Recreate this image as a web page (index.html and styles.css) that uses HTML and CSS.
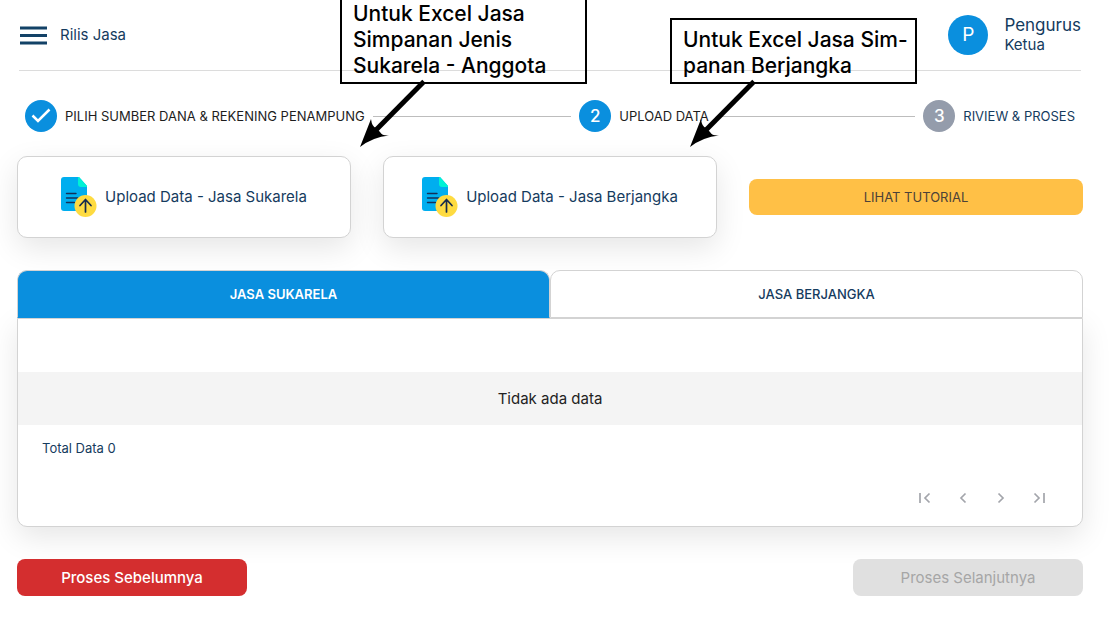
FILE: index.html
```html
<!DOCTYPE html>
<html lang="id">
<head>
<meta charset="utf-8">
<meta name="viewport" content="width=device-width, initial-scale=1">
<title>Rilis Jasa</title>
<link rel="stylesheet" href="styles.css">
</head>
<body>
<svg class="defs" aria-hidden="true">
  <symbol id="file-upload" viewBox="0 0 36 41">
    <path fill="#00aeef" d="M3 0h15l8 9v22a3 3 0 0 1-3 3H3a3 3 0 0 1-3-3V3a3 3 0 0 1 3-3z"/>
    <path fill="#00f2d5" d="M17 0h1l8 9v1h-6a3 3 0 0 1-3-3z"/>
    <path fill="none" stroke="#123159" stroke-width="1.4" stroke-linecap="round" d="M5.500 16.500h9.500M5.500 21h11M5.500 25.500h8"/>
    <circle cx="24.500" cy="29" r="11" fill="#fedb41"/>
    <path fill="none" stroke="#172b4d" stroke-width="1.700" stroke-linecap="round" stroke-linejoin="round" d="M24.500 35V23M19 28.500l5.500-6 5.500 6"/>
  </symbol>
  <symbol id="arrow" viewBox="0 0 68 70">
    <path fill="none" stroke="#000" stroke-width="5" d="M65 2.500L14 54"/>
    <path d="M1 68L12 40Q13 48 17 49L21 53Q23 57 30 56.500Q14 58 1 68z"/>
  </symbol>
</svg>

<div class="page">
  <header class="topbar">
    <button class="menu" type="button" aria-label="Menu">
      <svg width="27" height="19" viewBox="0 0 27 19"><path fill="#134267" d="M0 .5h27v3H0zM0 8h27v3H0zM0 15.500h27v3H0z"/></svg>
    </button>
    <h1 class="title">Rilis Jasa</h1>
    <div class="user">
      <span class="avatar">P</span>
      <div class="who">
        <div class="name">Pengurus</div>
        <div class="role">Ketua</div>
      </div>
    </div>
  </header>

  <main>
    <ol class="stepper">
      <li class="step done">
        <span class="dot"><svg width="20" height="16" viewBox="0 0 20 16"><path fill="none" stroke="#fff" stroke-width="2.500" d="M1.500 7.500l5.500 5.500L18.500 1.500"/></svg></span>
        PILIH SUMBER DANA &amp; REKENING PENAMPUNG
      </li>
      <li class="line" aria-hidden="true"></li>
      <li class="step active"><span class="dot">2</span>UPLOAD DATA</li>
      <li class="line" aria-hidden="true"></li>
      <li class="step"><span class="dot">3</span>RIVIEW &amp; PROSES</li>
    </ol>

    <div class="actions">
      <button class="upload" type="button"><svg width="36" height="41"><use href="#file-upload"/></svg>Upload Data - Jasa Sukarela</button>
      <button class="upload" type="button"><svg width="36" height="41"><use href="#file-upload"/></svg>Upload Data - Jasa Berjangka</button>
      <button class="tutorial" type="button">LIHAT TUTORIAL</button>
    </div>

    <div class="tabs" role="tablist">
      <button class="tab selected" type="button" role="tab" aria-selected="true" aria-controls="panel">JASA SUKARELA</button>
      <button class="tab" type="button" role="tab" aria-selected="false" aria-controls="panel">JASA BERJANGKA</button>
    </div>
    <section class="panel" id="panel" role="tabpanel">
      <table class="table">
        <thead><tr><th></th></tr></thead>
        <tbody><tr><td>Tidak ada data</td></tr></tbody>
      </table>
      <p class="total">Total Data 0</p>
      <nav class="pager" aria-label="Halaman">
        <button type="button" aria-label="Halaman pertama"><svg viewBox="0 0 14 14"><path d="M2 2v10M11.500 2.500L7 7l4.500 4.500"/></svg></button>
        <button type="button" aria-label="Sebelumnya"><svg viewBox="0 0 14 14"><path d="M9.500 2.500L5 7l4.500 4.500"/></svg></button>
        <button type="button" aria-label="Berikutnya"><svg viewBox="0 0 14 14"><path d="M4.500 2.500L9 7l-4.500 4.500"/></svg></button>
        <button type="button" aria-label="Halaman terakhir"><svg viewBox="0 0 14 14"><path d="M2.500 2.500L7 7l-4.500 4.500M12 2v10"/></svg></button>
      </nav>
    </section>

    <div class="footer">
      <button class="nav-button back" type="button">Proses Sebelumnya</button>
      <button class="nav-button next" type="button" disabled>Proses Selanjutnya</button>
    </div>
  </main>
</div>

<aside class="note note-sukarela">Untuk Excel Jasa<br>Simpanan Jenis<br>Sukarela - Anggota</aside>
<svg class="arrow arrow-sukarela" width="68" height="70" aria-hidden="true"><use href="#arrow"/></svg>
<aside class="note note-berjangka">Untuk Excel Jasa Sim-<br>panan Berjangka</aside>
<svg class="arrow arrow-berjangka" width="68" height="70" aria-hidden="true"><use href="#arrow"/></svg>
</body>
</html>
```
FILE: styles.css
```css
* { box-sizing: border-box; }

body {
  margin: 0;
  background: #fff;
  color: #153b5e;
  font: 15px/20px Inter, "Open Sans", sans-serif;
  position: relative;
}

button {
  font: inherit;
  color: inherit;
  border: 0;
  padding: 0;
  background: none;
  cursor: pointer;
}

svg { display: block; }
.defs { position: absolute; width: 0; height: 0; }

.page { padding: 0 30px 30px 17px; }

.topbar {
  display: flex;
  align-items: center;
  gap: 13px;
  height: 71px;
  margin: 0 2px;
  padding-left: 1px;
  border-bottom: 1px solid #dcdcdc;
}
.title { margin: 0; font-size: 15px; font-weight: 400; }
.user { display: flex; align-items: center; gap: 16px; margin-left: auto; }
.avatar {
  display: grid;
  place-items: center;
  width: 40px;
  height: 40px;
  border-radius: 50%;
  background: #0a8fde;
  color: #fff;
  font-size: 19px;
}
.name { font-size: 17px; }

.stepper {
  display: flex;
  align-items: center;
  gap: 8px;
  margin: 29px 0 24px;
  padding: 0 8px;
  list-style: none;
}
.step {
  display: flex;
  align-items: center;
  gap: 8px;
  white-space: nowrap;
  font-size: 13px;
}
.done, .active { color: #1d1d1d; }
.dot {
  display: grid;
  place-items: center;
  width: 32px;
  height: 32px;
  border-radius: 50%;
  background: #949cab;
  color: #fff;
  font-size: 17px;
  font-weight: 500;
}
.done .dot, .active .dot { background: #0a8fde; }
.line { flex: 1; height: 1px; background: #bdbdbd; }

.actions {
  display: grid;
  grid-template-columns: repeat(3, 1fr);
  align-items: center;
  gap: 32px;
  margin-bottom: 32px;
}
.upload {
  display: flex;
  align-items: center;
  justify-content: center;
  gap: 8px;
  height: 82px;
  border: 1px solid #d3d3d3;
  border-radius: 10px;
  background: #fff;
  box-shadow: 0 10px 30px rgba(0, 0, 0, .1);
}
.tutorial {
  height: 36px;
  border-radius: 8px;
  background: #ffc046;
  color: #4c4238;
  font-size: 13px;
}

.tabs { display: flex; position: relative; }
.tab {
  flex: 1;
  height: 48px;
  border: 1px solid #d3d3d3;
  border-radius: 10px 10px 0 0;
  background: #fff;
  font-size: 13px;
  font-weight: 500;
}
.selected {
  background: #0a8fde;
  border-bottom-color: #0a8fde;
  color: #fff;
  font-weight: 600;
}

.panel {
  border: 1px solid #d3d3d3;
  border-radius: 0 0 10px 10px;
  background: #fff;
  box-shadow: 0 10px 30px rgba(0, 0, 0, .1);
}
.table { width: 100%; border-collapse: collapse; }
.table th { height: 53px; padding: 0; }
.table td {
  height: 53px;
  padding: 0;
  background: #f4f4f4;
  color: #222;
  text-align: center;
}
.total { margin: 13px 24px 0; font-size: 13px; }
.pager {
  display: flex;
  justify-content: flex-end;
  padding: 21px 24px 9px;
}
.pager button { display: grid; place-items: center; width: 38px; height: 38px; }
.pager svg {
  width: 14px;
  height: 14px;
  fill: none;
  stroke: #a3a5ab;
  stroke-width: 1.7;
}

.footer {
  display: flex;
  justify-content: space-between;
  gap: 16px;
  margin-top: 32px;
  position: relative;
}
.nav-button { width: 230px; height: 37px; border-radius: 8px; }
.back { background: #d42e2f; color: #fff; font-weight: 500; }
.next { background: #e0e0e0; color: #a6a6a6; cursor: default; }

.note {
  position: absolute;
  border: 2px solid #000;
  color: #000;
  width: 247px;
  padding: 7px 11px 3px;
  font-size: 21px;
  line-height: 26px;
  font-weight: 500;
  white-space: nowrap;
}
.note-sukarela { left: 340px; top: -8px; }
.note-berjangka { left: 670px; top: 18px; }
.arrow { position: absolute; top: 79px; }
.arrow-sukarela { left: 359px; }
.arrow-berjangka { left: 689px; }
```
